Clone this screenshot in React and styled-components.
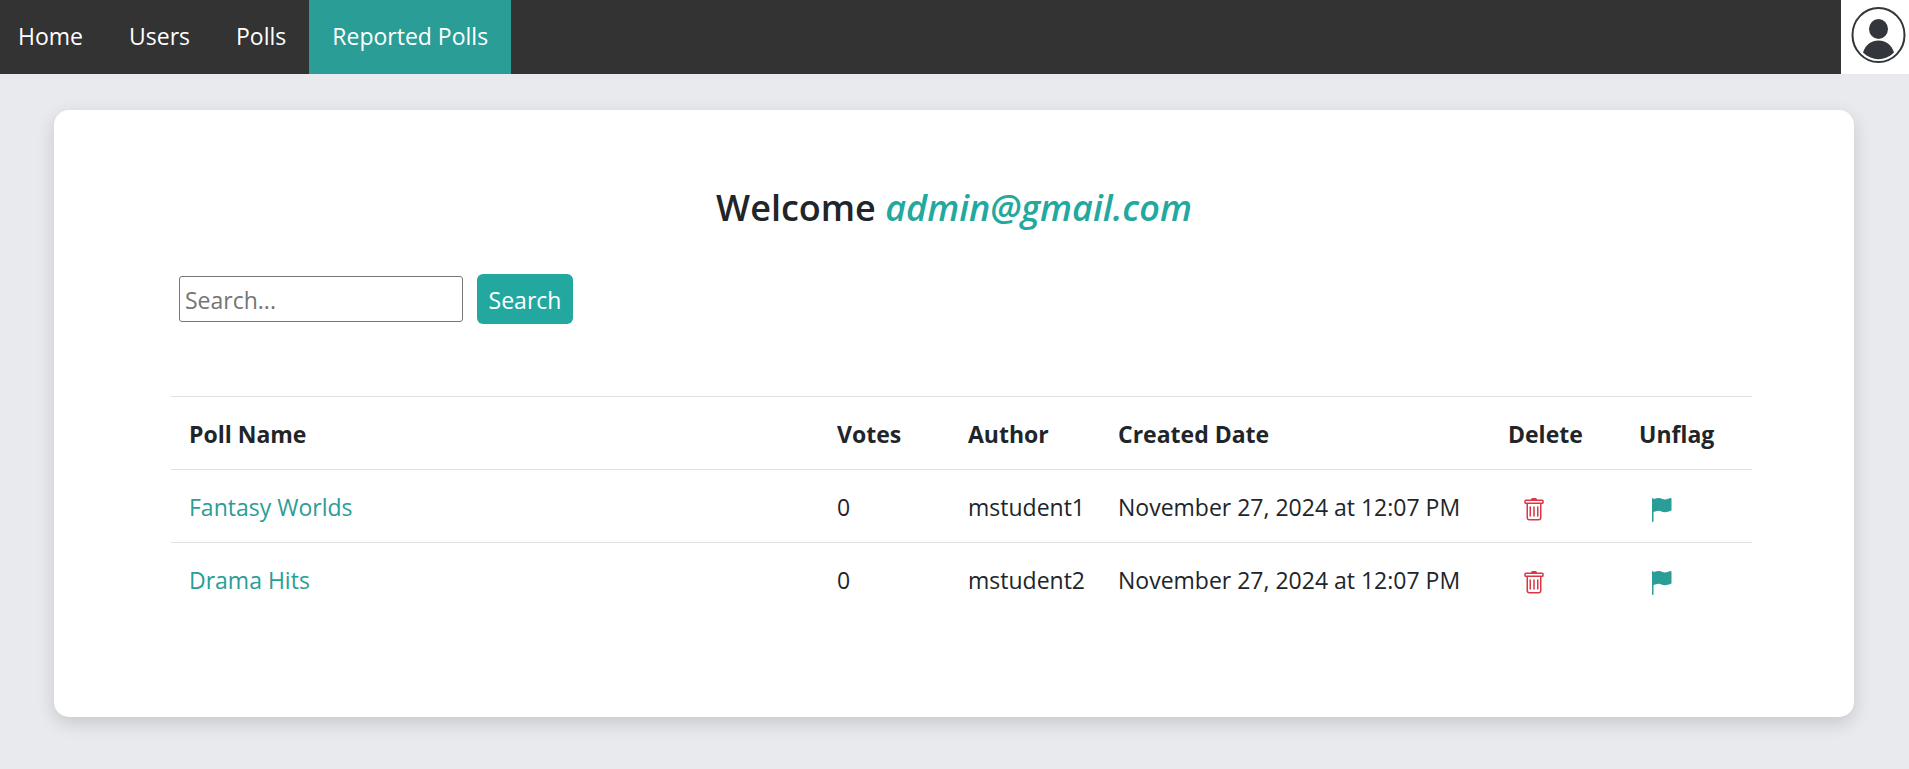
import React from "react";
import styled, { createGlobalStyle } from "styled-components";
import { BsTrash, BsFlagFill } from "react-icons/bs";

const GlobalStyle = createGlobalStyle`
  *, *::before, *::after { box-sizing: border-box; }
  body {
    margin: 0;
    background: #e9eaee;
    color: #212529;
    font-family: "Segoe UI", "Open Sans", "Noto Sans", sans-serif;
    font-size: 23px;
    line-height: 36px;
  }
`;

const NavBar = styled.nav`
  display: flex;
  justify-content: space-between;
  height: 74px;
  background: #333;
`;

const NavLinks = styled.ul`
  display: flex;
  margin: 0;
  padding: 0;
  list-style: none;
`;

const NavLink = styled.a`
  display: flex;
  align-items: center;
  height: 100%;
  padding: 0 23px 2px;
  color: #fff;
  text-decoration: none;
  background: ${({ $active }) => ($active ? "#2a9d96" : "transparent")};

  li:first-child > & { padding-left: 18px; }
`;

const AvatarButton = styled.button`
  width: 68px;
  padding: 6px 2px 10px 9px;
  border: 0;
  background: #fff;
  cursor: pointer;

  svg { display: block; width: 100%; height: 100%; }
`;

const Card = styled.main`
  margin: 36px 55px 36px 54px;
  padding: 72px 102px 101px 117px;
  border-radius: 15px;
  background: #fff;
  box-shadow: 0 6px 18px rgba(0, 0, 0, 0.15);
`;

const Title = styled.h2`
  margin: 0 15px 40px 0;
  font-size: 36px;
  font-weight: 600;
  line-height: 52px;
  text-align: center;
`;

const Account = styled.em`
  color: #23a89f;
`;

const SearchForm = styled.form`
  display: flex;
  align-items: center;
  gap: 14px;
  margin-bottom: 72px;
  padding-left: 8px;
`;

const SearchInput = styled.input`
  width: 284px;
  height: 46px;
  padding: 4px 5px 2px;
  border: 1px solid #767676;
  border-radius: 3px;
  font: inherit;
  color: inherit;

  &::placeholder { color: #757575; opacity: 1; }
`;

const SearchButton = styled.button`
  width: 96px;
  height: 50px;
  padding: 2px 0 0;
  border: 0;
  border-radius: 6px;
  background: #23a89f;
  color: #fff;
  font: inherit;
  cursor: pointer;
`;

const Table = styled.table`
  width: 100%;
  table-layout: fixed;
  border-collapse: collapse;
  text-align: left;

  tr { height: 73px; border-top: 1px solid #dee2e6; }
  th, td { padding: 2px 0 0 18px; white-space: nowrap; }
  th { font-weight: 700; }
`;

const Column = styled.col`
  width: ${({ $width }) => $width};
`;

const PollLink = styled.a`
  color: #2a9d96;
  text-decoration: none;
`;

const IconButton = styled.button`
  display: block;
  margin-left: ${({ $inset }) => $inset};
  padding: 6px 0 0;
  border: 0;
  background: none;
  color: ${({ $color }) => $color};
  cursor: pointer;

  svg { display: block; width: 24px; height: 24px; }
`;

const navItems = ["Home", "Users", "Polls", "Reported Polls"];

const polls = [
  { name: "Fantasy Worlds", votes: 0, author: "mstudent1", created: "November 27, 2024 at 12:07 PM" },
  { name: "Drama Hits", votes: 0, author: "mstudent2", created: "November 27, 2024 at 12:07 PM" },
];

function Avatar() {
  return (
    <svg viewBox="0 0 57 58" aria-hidden="true">
      <ellipse cx="28.5" cy="29" rx="26" ry="27" fill="none" stroke="#33373c" strokeWidth="2" />
      <ellipse cx="28.5" cy="23" rx="9.5" ry="10" fill="#33373c" />
      <path d="M13 46.5C15.5 38.5 21.5 34.5 28.5 34.5S41.5 38.5 44 46.5C39.5 51 34 53.2 28.5 53.2S17.5 51 13 46.5Z" fill="#33373c" />
    </svg>
  );
}

export default function App() {
  return (
    <>
      <GlobalStyle />
      <NavBar>
        <NavLinks>
          {navItems.map((item) => (
            <li key={item}>
              <NavLink href="#" $active={item === "Reported Polls"}>{item}</NavLink>
            </li>
          ))}
        </NavLinks>
        <AvatarButton type="button" aria-label="Account">
          <Avatar />
        </AvatarButton>
      </NavBar>
      <Card>
        <Title>Welcome <Account>admin@gmail.com</Account></Title>
        <SearchForm onSubmit={(event) => event.preventDefault()}>
          <SearchInput type="text" placeholder="Search..." aria-label="Search polls" />
          <SearchButton type="submit">Search</SearchButton>
        </SearchForm>
        <Table>
          <colgroup>
            <Column $width="auto" />
            <Column $width="131px" />
            <Column $width="150px" />
            <Column $width="390px" />
            <Column $width="131px" />
            <Column $width="131px" />
          </colgroup>
          <thead>
            <tr>
              <th scope="col">Poll Name</th>
              <th scope="col">Votes</th>
              <th scope="col">Author</th>
              <th scope="col">Created Date</th>
              <th scope="col">Delete</th>
              <th scope="col">Unflag</th>
            </tr>
          </thead>
          <tbody>
            {polls.map((poll) => (
              <tr key={poll.name}>
                <td><PollLink href="#">{poll.name}</PollLink></td>
                <td>{poll.votes}</td>
                <td>{poll.author}</td>
                <td>{poll.created}</td>
                <td>
                  <IconButton type="button" $inset="14px" $color="#dc3545" aria-label={`Delete ${poll.name}`}>
                    <BsTrash />
                  </IconButton>
                </td>
                <td>
                  <IconButton type="button" $inset="10px" $color="#2a9d96" aria-label={`Unflag ${poll.name}`}>
                    <BsFlagFill />
                  </IconButton>
                </td>
              </tr>
            ))}
          </tbody>
        </Table>
      </Card>
    </>
  );
}
